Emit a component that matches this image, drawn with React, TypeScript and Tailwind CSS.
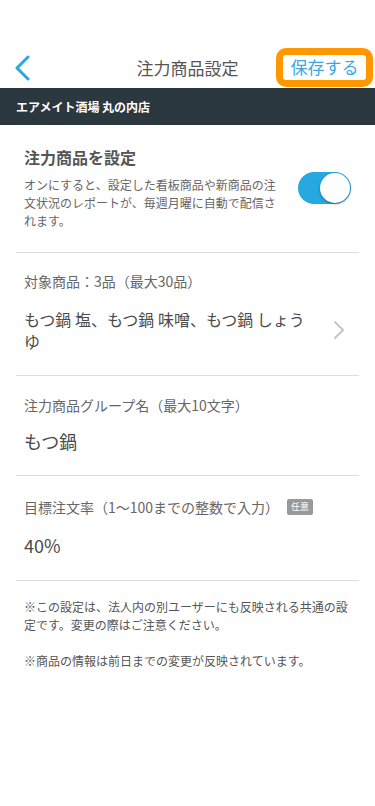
import React, { useState } from 'react';

const font = { fontFamily: '"Noto Sans CJK JP", "Noto Sans", sans-serif' };

const BackIcon = () => (
    <svg width="18" height="26" viewBox="0 0 18 26" fill="none" stroke="#2ba6e1" strokeWidth={3} strokeLinecap="round" strokeLinejoin="round">
        <path d="M14 2 L3 13 L14 24" />
    </svg>
);

const ChevronRight = () => (
    <svg width="12" height="20" viewBox="0 0 12 20" fill="none" stroke="#c4c4c4" strokeWidth={2} strokeLinecap="round" strokeLinejoin="round">
        <path d="M2 2 L10 10 L2 18" />
    </svg>
);

const Toggle = ({ on, onChange }: { on: boolean; onChange: () => void }) => (
    <button
        onClick={onChange}
        className={`relative w-[53px] h-[32px] rounded-full flex-shrink-0 transition ${on ? 'bg-[#26a9e0]' : 'bg-[#cccccc]'}`}
    >
        <span
            className={`absolute top-[1px] w-[30px] h-[30px] rounded-full bg-white shadow-[0_1px_3px_rgba(0,0,0,0.35)] transition-all ${on ? 'right-[1px]' : 'left-[1px]'}`}
        />
    </button>
);

export default function App() {
    const [on, setOn] = useState(true);

    return (
        <div className="min-h-[806px] bg-white text-[#333]" style={font}>
            <header className="pt-[48px]">
                <div className="grid grid-cols-[1fr_auto_1fr] items-center h-[40px]">
                    <div className="pl-[14px] flex items-center">
                        <BackIcon />
                    </div>
                    <h1 className="text-[17px] text-[#555]">注力商品設定</h1>
                    <div className="flex justify-end pr-[2px]">
                        <button className="w-[97px] h-[39px] -mt-[2px] border-[7px] border-[#ff9800] rounded-[10px] bg-white text-[17px] text-[#3aa9e2] flex items-center justify-center">
                            保存する
                        </button>
                    </div>
                </div>
            </header>

            <div className="bg-[#2c3840] h-[37px] flex items-center px-4">
                <span className="text-white text-[12px] font-bold">エアメイト酒場 丸の内店</span>
            </div>

            <main className="px-4">
                <section className="px-2 pt-[20px] pb-[22px] border-b border-[#dddddd] flex items-center justify-between">
                    <div className="w-[256px]">
                        <h2 className="text-[16px] font-bold text-[#555] leading-[24px]">注力商品を設定</h2>
                        <p className="mt-[7px] text-[12px] leading-[18px] text-[#666]">
                            オンにすると、設定した看板商品や新商品の注文状況のレポートが、毎週月曜に自動で配信されます。
                        </p>
                    </div>
                    <Toggle on={on} onChange={() => setOn(!on)} />
                </section>

                <section className="px-2 pt-[18px] pb-[23px] border-b border-[#dddddd]">
                    <div className="text-[14px] leading-[20px] text-[#666]">対象商品：3品（最大30品）</div>
                    <div className="flex items-center justify-between mt-[17px]">
                        <p className="w-[290px] text-[16px] leading-[22px] text-[#4a4a4a]">もつ鍋 塩、もつ鍋 味噌、もつ鍋 しょうゆ</p>
                        <span className="pr-[6px]"><ChevronRight /></span>
                    </div>
                </section>

                <section className="px-2 pt-[19px] pb-[21px] border-b border-[#dddddd]">
                    <div className="text-[14px] leading-[20px] text-[#666]">注力商品グループ名（最大10文字）</div>
                    <div className="mt-[13px] text-[18px] leading-[26px] text-[#4a4a4a]">もつ鍋</div>
                </section>

                <section className="px-2 pt-[21px] pb-[22px] border-b border-[#dddddd]">
                    <div className="flex items-center gap-[8px] text-[14px] leading-[20px] text-[#666]">
                        <span>目標注文率（1〜100までの整数で入力）</span>
                        <span className="bg-[#999999] text-white text-[9px] leading-[16px] px-[4px] rounded-[2px]">任意</span>
                    </div>
                    <div className="mt-[15px] text-[18px] leading-[26px] text-[#4a4a4a]">40%</div>
                </section>

                <section className="px-2 pt-[17px] text-[12px] leading-[18px] text-[#555]">
                    <p>※この設定は、法人内の別ユーザーにも反映される共通の設定です。変更の際はご注意ください。</p>
                    <p className="mt-[18px]">※商品の情報は前日までの変更が反映されています。</p>
                </section>
            </main>
        </div>
    );
}
